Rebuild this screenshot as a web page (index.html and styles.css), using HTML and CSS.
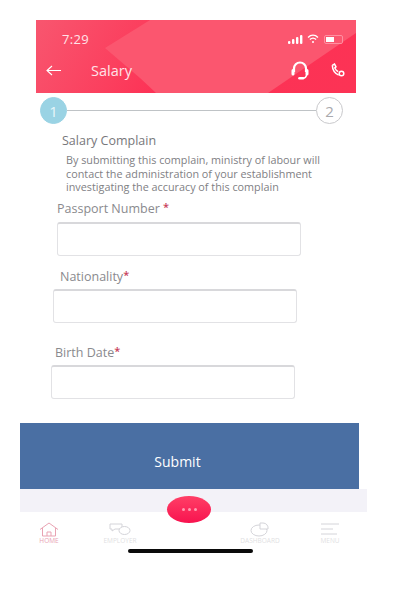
FILE: index.html
```html
<!DOCTYPE html>
<html lang="en">
<head>
    <meta charset="UTF-8">
    <meta name="viewport" content="width=device-width, initial-scale=1.0">
    <title>Salary</title>
    <link rel="stylesheet" href="styles.css">
</head>
<body>
    <header class="app-header">
        <div class="status-bar">
            <span class="status-time">7:29</span>
            <div class="status-icons">
                <svg width="15" height="9" viewBox="0 0 15 9" fill="#fff"><rect x="0" y="6" width="2.4" height="3" rx="1"/><rect x="4" y="4" width="2.4" height="5" rx="1"/><rect x="8" y="2" width="2.4" height="7" rx="1"/><rect x="12" y="0" width="2.4" height="9" rx="1"/></svg>
                <svg width="12" height="10" viewBox="0 0 12 10" fill="none" stroke="#fff" stroke-width="1.4"><path d="M1 3.4C4 .6 8 .6 11 3.4"/><path d="M2.9 5.5C4.8 3.8 7.2 3.8 9.1 5.5"/><circle cx="6" cy="8" r="1" fill="#fff" stroke="none"/></svg>
                <div class="battery"><div class="battery-level"></div></div>
            </div>
        </div>
        <div class="title-bar">
            <svg class="back-icon" width="15" height="11" viewBox="0 0 15 11" fill="none" stroke="#fff" stroke-width="1.1"><path d="M15 5.500H1M6 1 1 5.500 6 10"/></svg>
            <h1>Salary</h1>
            <svg class="headset-icon" width="18" height="19" viewBox="0 0 18 19" fill="none" stroke="#fff"><path d="M3 11V7.500a6 6 0 0 1 12 0V11" stroke-width="2.200"/><path d="M2 9.500v3.500M16 9.500v3.500" stroke-width="3" stroke-linecap="round"/><path d="M15.500 13.500c0 2.500-2 3.800-4.500 3.800" stroke-width="1.400"/><path d="M8.500 17.200h3.500" stroke-width="2.600" stroke-linecap="round"/></svg>
            <svg class="phone-icon" width="14" height="14" viewBox="0 0 14 14" fill="none" stroke="#fff" stroke-width="1.500"><path d="M1.300 2.300 3.500 1 5 3.800 3.800 5c.8 1.700 1.800 2.800 3.400 3.700"/><path d="M1.300 2.300c.2 4.500 3 8.400 6.400 9.800"/><circle cx="10.500" cy="10.500" r="2.300"/></svg>
        </div>
    </header>

    <div class="stepper">
        <span class="step step-active">1</span>
        <span class="step-line"></span>
        <span class="step">2</span>
    </div>

    <section class="intro">
        <h2>Salary Complain</h2>
        <p>By submitting this complain, ministry of labour will contact the administration of your establishment investigating the accuracy of this complain</p>
    </section>

    <form class="complain-form">
        <div class="form-group group-passport">
            <label for="passport">Passport Number <span class="required">*</span></label>
            <input type="text" id="passport" name="passport">
        </div>
        <div class="form-group group-nationality">
            <label for="nationality">Nationality<span class="required">*</span></label>
            <input type="text" id="nationality" name="nationality">
        </div>
        <div class="form-group group-birth">
            <label for="birth">Birth Date<span class="required">*</span></label>
            <input type="text" id="birth" name="birth">
        </div>
        <button type="button" class="submit-btn">Submit</button>
    </form>

    <div class="tab-strip">
        <div class="fab"><span></span><span></span><span></span></div>
    </div>

    <nav class="tab-bar">
        <div class="tab tab-active">
            <svg width="20" height="15" viewBox="0 0 20 15" fill="none" stroke="#e9a3b3"><path d="M1 7.500 10 1l9 6.500M3.500 6V14h13V6M8 14v-4h4v4"/></svg>
            <span>HOME</span>
        </div>
        <div class="tab tab-employ">
            <svg width="22" height="13" viewBox="0 0 22 13" fill="none" stroke="#d4d4d9"><path d="M1 1h12v5H6L3 8V6H1z"/><ellipse cx="15.500" cy="7.500" rx="5.500" ry="4" fill="#fff"/></svg>
            <span>EMPLOYER</span>
        </div>
        <div class="tab tab-dash">
            <svg width="20" height="15" viewBox="0 0 20 15" fill="none" stroke="#d4d4d9"><ellipse cx="9" cy="8.500" rx="8" ry="5.500"/><path d="M10 1h3a5 5 0 0 1 5 6h-8z" fill="#fff"/></svg>
            <span>DASHBOARD</span>
        </div>
        <div class="tab tab-menu">
            <svg width="20" height="13" viewBox="0 0 20 13" fill="none" stroke="#d4d4d9"><path d="M1 1h18M1 6h12M1 11h16"/></svg>
            <span>MENU</span>
        </div>
    </nav>

    <div class="home-indicator"></div>
</body>
</html>
```

FILE: styles.css
```css
* {
    margin: 0;
    padding: 0;
    box-sizing: border-box;
}

body {
    background-color: #ffffff;
    color: #77777b;
    font-family: 'Open Sans', 'Noto Sans', sans-serif;
    width: 400px;
    height: 589px;
    overflow: hidden;
    padding-top: 20px;
}

.app-header {
    position: relative;
    width: 320px;
    height: 73px;
    margin-left: 36px;
    padding: 11px 11px 0 11px;
    color: #ffffff;
    background: linear-gradient(120deg, #f8566f 0, #fb3f5e 30%, #fd3155 45%, #fc3355 100%);
}

/* lighter facet behind the header content */
.app-header::before {
    content: "";
    position: absolute;
    inset: 0;
    background-color: #fb566f;
    clip-path: polygon(114px 0, 69px 28px, 104px 58px, 120px 73px, 232px 73px, 320px 13px, 320px 0);
}

.status-bar,
.title-bar {
    position: relative;
}

.status-bar {
    display: flex;
    justify-content: space-between;
    align-items: center;
    height: 16px;
    padding-left: 15px;
}

.status-time {
    font-size: 13px;
    letter-spacing: 0.3px;
    color: #ffe3e8;
}

.status-icons {
    display: flex;
    align-items: center;
    gap: 4px;
    margin-right: 2px;
}

.battery {
    width: 19px;
    height: 9px;
    margin-left: 1px;
    padding: 1px;
    border: 1px solid #ff8fa1;
    border-radius: 2px;
}

.battery-level {
    width: 8px;
    height: 100%;
    background-color: #ffffff;
}

.title-bar {
    display: flex;
    align-items: center;
    margin-top: 12px;
    height: 22px;
}

.back-icon {
    flex-shrink: 0;
    margin-left: -1px;
}

.title-bar h1 {
    flex: 1;
    margin-left: 30px;
    font-size: 14.500px;
    font-weight: 400;
    color: #ffe3e8;
}

.phone-icon {
    margin-left: 22px;
}

.stepper {
    display: flex;
    align-items: center;
    width: 303px;
    margin: 4px 0 0 40px;
}

.step {
    flex-shrink: 0;
    display: flex;
    justify-content: center;
    align-items: center;
    width: 27px;
    height: 27px;
    border: 1px solid #c9c9cc;
    border-radius: 50%;
    font-size: 15px;
    color: #a9a9ad;
}

.step-active {
    background-color: #9ad3e4;
    border-color: #9ad3e4;
    color: #e8f6fa;
}

.step-line {
    flex: 1;
    height: 1px;
    background-color: #bfc3c6;
}

.intro {
    margin: 8px 0 0 62px;
}

.intro h2 {
    font-size: 12.500px;
    font-weight: 400;
    line-height: 18px;
    color: #77777b;
}

.intro p {
    width: 266px;
    margin: 3px 0 0 4px;
    font-size: 10.800px;
    line-height: 13.500px;
    color: #808084;
}

.complain-form {
    display: flex;
    flex-direction: column;
}

.form-group label {
    display: block;
    font-size: 12.500px;
    line-height: 18px;
    color: #8a8a8e;
}

.form-group input {
    display: block;
    width: 244px;
    height: 34px;
    background-color: #ffffff;
    border: 1px solid #e2e2e5;
    border-top: 2px solid #d8d8db;
    border-radius: 3px;
}

.required {
    position: relative;
    top: -2px;
    font-size: 11px;
    font-weight: 600;
    color: #c8405a;
}

.group-passport {
    margin: 6px 0 0 57px;
}

.group-passport input {
    margin-top: 4px;
}

.group-nationality {
    margin: 12px 0 0 53px;
}

.group-nationality label {
    padding-left: 7px;
}

.group-nationality input {
    margin-top: 3px;
}

.group-birth {
    margin: 21px 0 0 51px;
}

.group-birth label {
    padding-left: 4px;
}

.group-birth input {
    margin-top: 3px;
}

.submit-btn {
    width: 339px;
    height: 66px;
    margin: 24px 0 0 20px;
    padding: 11px 24px 0 0;
    background-color: #4a6fa3;
    color: #ffffff;
    border: none;
    font-family: inherit;
    font-size: 14px;
}

.tab-strip {
    display: flex;
    justify-content: center;
    width: 347px;
    height: 23px;
    margin-left: 20px;
    padding-right: 9px;
    background-color: #f3f2f8;
}

.fab {
    position: relative;
    display: flex;
    justify-content: center;
    align-items: center;
    gap: 3px;
    flex-shrink: 0;
    width: 44px;
    height: 27px;
    margin-top: 7px;
    border-radius: 50%;
    background: linear-gradient(#ff3f66, #f8134f);
}

.fab span {
    width: 3px;
    height: 3px;
    border-radius: 50%;
    background-color: #ff9db2;
}

.tab-bar {
    display: flex;
    height: 34px;
    padding-top: 10px;
}

.tab {
    display: flex;
    flex-direction: column;
    align-items: center;
    width: 60px;
    font-size: 6.500px;
    line-height: 8px;
    color: #dfdfe3;
}

.tab svg {
    height: 15px;
}

.tab-active {
    margin-left: 19px;
    color: #e9a3b3;
}

.tab-employ {
    margin-left: 11px;
}

.tab-dash {
    margin-left: 80px;
}

.tab-menu {
    margin-left: 10px;
}

.home-indicator {
    width: 125px;
    height: 4px;
    margin: 3px 0 0 128px;
    border-radius: 2px;
    background-color: #0a0a0a;
}
```
